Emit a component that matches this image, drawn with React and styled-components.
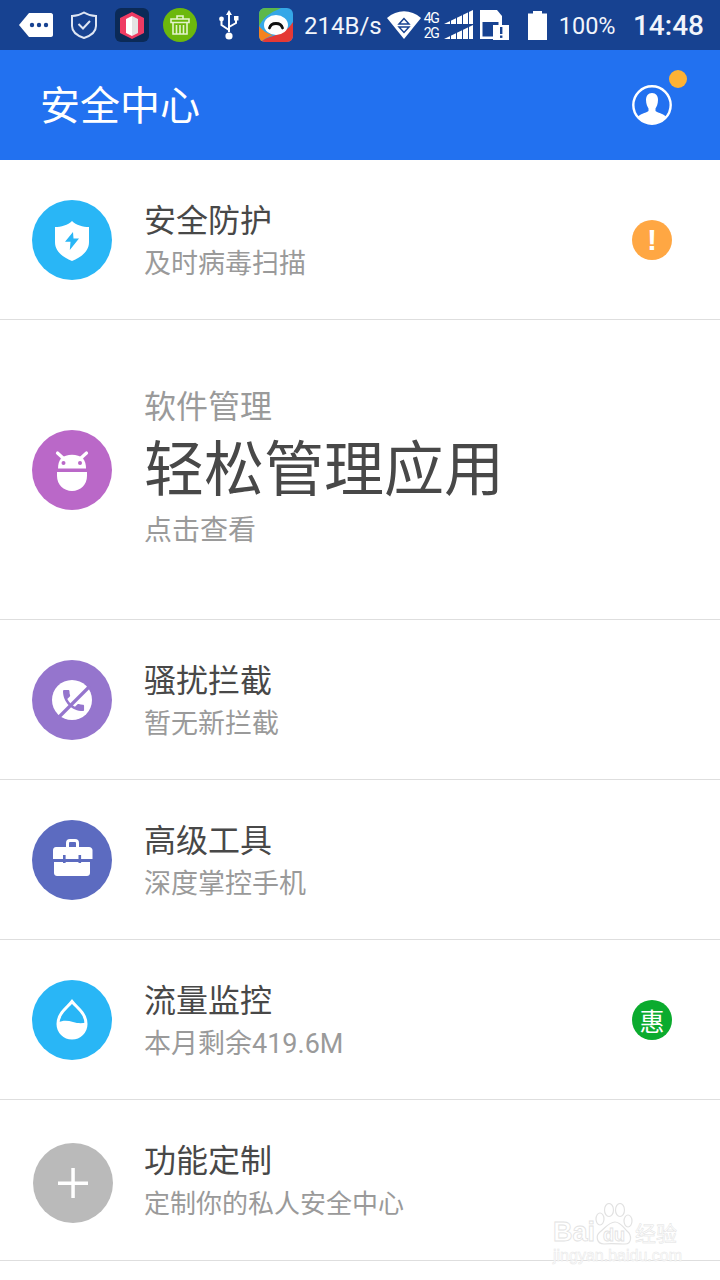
import React from "react";
import styled, { createGlobalStyle } from "styled-components";

const Global = createGlobalStyle`
  html, body { margin: 0; padding: 0; background: #fff; }
  body { font-family: Roboto, "Noto Sans CJK SC", sans-serif; }
`;

const Page = styled.div`
  position: relative;
  width: 720px;
  height: 1280px;
  overflow: hidden;
  background: #fff;
`;

const StatusBar = styled.div`
  display: flex;
  align-items: center;
  height: 50px;
  padding: 0 16px 0 19px;
  box-sizing: border-box;
  background: #174291;
  color: #fff;
`;

const Glyph = styled.svg`
  flex: none;
  margin-left: ${(p) => p.$gap || 0}px;
`;

const StatusText = styled.span`
  margin-left: ${(p) => p.$gap || 0}px;
  padding-top: 2px;
  font-size: ${(p) => p.$size}px;
  font-weight: ${(p) => p.$weight || 400};
  line-height: 48px;
  white-space: nowrap;
  color: #f2f5fb;
`;

const NetLabels = styled.div`
  display: flex;
  flex-direction: column;
  width: 15px;
  margin: 2px 0 0 3px;
  font-size: 14px;
  line-height: 15px;
  letter-spacing: -1.300px;
`;

const Clock = styled(StatusText)`
  margin-left: auto;
`;

const Header = styled.header`
  display: flex;
  align-items: center;
  justify-content: space-between;
  height: 110px;
  padding: 0 48px 0 40px;
  box-sizing: border-box;
  background: #2271f0;
`;

const HeaderTitle = styled.h1`
  margin: 4px 0 0;
  font-size: 40px;
  font-weight: 400;
  color: #fff;
  line-height: 56px;
`;

const Avatar = styled.div`
  position: relative;
  width: 40px;
  height: 40px;
`;

const AvatarDot = styled.span`
  position: absolute;
  top: -15px;
  right: -15px;
  width: 18px;
  height: 18px;
  border-radius: 50%;
  background: #fdb235;
`;

const Row = styled.div`
  display: flex;
  align-items: center;
  height: ${(p) => p.$height}px;
  padding: 0 48px 0 32px;
  box-sizing: border-box;
  border-bottom: 1px solid #dedede;
`;

const IconCircle = styled.div`
  flex: none;
  width: 80px;
  height: 80px;
  margin: ${(p) => (p.$low ? "6px 0 0 1px" : "0")};
  border-radius: 50%;
  background: ${(p) => p.$color};
`;

const TextBlock = styled.div`
  flex: 1;
  display: flex;
  flex-direction: column;
  margin-left: ${(p) => (p.$low ? 31 : 32)}px;
  padding: ${(p) => (p.$big ? "0 0 5px" : "4px 0 0")};
`;

const Title = styled.div`
  font-size: 32px;
  line-height: 44px;
  color: ${(p) => (p.$muted ? "#9a9a9a" : "#484848")};
`;

const Big = styled.div`
  font-size: 60px;
  line-height: 84px;
  color: #484848;
`;

const Sub = styled.div`
  font-size: ${(p) => p.$size || 27}px;
  line-height: ${(p) => (p.$size === 28 ? 36 : 42)}px;
  color: #9a9a9a;
`;

const Badge = styled.div`
  flex: none;
  display: flex;
  align-items: center;
  justify-content: center;
  width: 40px;
  height: 40px;
  border-radius: 50%;
  background: ${(p) => p.$color};
  color: #fff;
  font-size: ${(p) => p.$size}px;
  font-weight: ${(p) => p.$weight || 400};
`;

const AlertMark = styled.span`
  font-family: "Liberation Sans", sans-serif;
  line-height: 40px;
`;

const Watermark = styled.div`
  position: absolute;
  left: 552px;
  top: 1200px;
  width: 140px;
  height: 64px;
  color: #fff;
  -webkit-text-stroke: 0.8px #e2e2e2;
`;

const WmBai = styled.span`
  position: absolute;
  left: 1px;
  top: 16px;
  font: 700 27px/32px "Liberation Sans", sans-serif;
`;

const WmDu = styled.span`
  position: absolute;
  left: 43px;
  top: 3px;
`;

const WmCn = styled.span`
  position: absolute;
  left: 83px;
  top: 18px;
  font: 400 21px/28px "Noto Sans CJK SC", sans-serif;
  -webkit-text-stroke: 0.5px #e2e2e2;
`;

const WmUrl = styled.span`
  position: absolute;
  left: 1px;
  top: 47px;
  font: 400 16px/18px "Liberation Sans", sans-serif;
  -webkit-text-stroke: 0.5px #e6e6e6;
  white-space: nowrap;
`;

const Shield = () => (
  <svg width="80" height="80" viewBox="0 0 80 80">
    <path fill="#fff" d="M40 21C44 25 51 27 57 27V42C57 51 50 57 40 61C30 57 23 51 23 42V27C29 27 36 25 40 21Z" />
    <path fill="#29b6f6" d="M41 32L33 41.700H38.500L37.800 50L47 38.500H41.500Z" />
  </svg>
);

const Droid = () => (
  <svg width="80" height="80" viewBox="0 0 80 80" fill="#fff">
    <path d="M26 38.500C26 34 27 31 29 28.500C34 23.500 46 23.500 51 28.500C53 31 54 34 54 38.500Z" />
    <path fill="none" stroke="#fff" strokeWidth="3.200" strokeLinecap="round" d="M25.500 23L31 28M54.500 23L49 28" />
    <path d="M25 42H55V46C55 54.500 48.500 61 40 61C31.500 61 25 54.500 25 46Z" />
    <circle cx="31.500" cy="33" r="2" fill="#ba68c8" />
    <circle cx="48" cy="33" r="2" fill="#ba68c8" />
  </svg>
);

const PhoneBlock = () => (
  <svg width="80" height="80" viewBox="0 0 80 80">
    <circle cx="40" cy="40" r="20" fill="#fff" />
    <path
      fill="#9575cd"
      transform="translate(27.500 26.500) scale(1.170)"
      d="M6.620 10.790c1.440 2.830 3.760 5.140 6.590 6.590l2.200-2.200c.27-.27.67-.36 1.020-.24 1.120.37 2.330.57 3.570.57.55 0 1 .45 1 1V20c0 .55-.45 1-1 1-9.390 0-17-7.610-17-17 0-.55.45-1 1-1h3.500c.55 0 1 .45 1 1 0 1.250.2 2.450.57 3.570.11.35.03.74-.25 1.020l-2.200 2.200z"
    />
    <path stroke="#9575cd" strokeWidth="3.200" d="M58 26L26 58" />
  </svg>
);

const Toolbox = () => (
  <svg width="80" height="80" viewBox="0 0 80 80" fill="#fff">
    <path fill="none" stroke="#fff" strokeWidth="3" d="M35.500 27V23C35.500 21.500 36.500 20.500 38 20.500H43C44.500 20.500 45.500 21.500 45.500 23V27" />
    <path d="M24 27H57C59 27 60.500 28.500 60.500 30.500V39H21V30.500C21 28.500 22 27 24 27Z" />
    <path d="M22 42H58V53C58 55 56.500 56 55 56H25C23.500 56 22 55 22 53Z" />
    <rect x="31" y="35" width="2.600" height="8" fill="#5c6bc0" />
    <rect x="46.500" y="35" width="2.600" height="8" fill="#5c6bc0" />
    <rect x="21" y="39" width="38" height="3" fill="#5c6bc0" />
  </svg>
);

const Drop = () => (
  <svg width="80" height="80" viewBox="0 0 80 80">
    <path fill="none" stroke="#fff" strokeWidth="3" d="M40 21.500C45 28 54 33 54 44A14 14 0 0 1 26 44C26 33 35 28 40 21.500Z" />
    <path fill="#fff" d="M26 42.500C31 40 36 40.500 41 42C46 43.500 50 43.500 54 42.500V44A14 14 0 0 1 26 44Z" />
  </svg>
);

const Plus = () => (
  <svg width="80" height="80" viewBox="0 0 80 80" fill="#fff">
    <rect x="25" y="38.500" width="30" height="3.500" />
    <rect x="38.300" y="25" width="3.500" height="30" />
  </svg>
);

const AvatarIcon = () => (
  <svg width="40" height="40" viewBox="0 0 40 40">
    <defs>
      <clipPath id="avatarClip">
        <circle cx="20" cy="20" r="18.500" />
      </clipPath>
    </defs>
    <circle cx="20" cy="20" r="18.700" fill="none" stroke="#fff" strokeWidth="2.400" />
    <g clipPath="url(#avatarClip)" fill="#fff">
      <path d="M20 8C24 8 26 11 26 15C26 19 24.500 22 23.500 23.500V26C26 28 33 29 35 33V40H5V33C7 29 14 28 16.500 26V23.500C15.500 22 14 19 14 15C14 11 16 8 20 8Z" />
    </g>
  </svg>
);

const rows = [
  { h: 160, color: "#29b6f6", Icon: Shield, title: "安全防护", sub: "及时病毒扫描", alert: true },
  { big: true, h: 300, color: "#ba68c8", Icon: Droid },
  { h: 160, color: "#9575cd", Icon: PhoneBlock, title: "骚扰拦截", sub: "暂无新拦截" },
  { h: 160, color: "#5c6bc0", Icon: Toolbox, title: "高级工具", sub: "深度掌控手机" },
  { h: 160, color: "#29b6f6", Icon: Drop, title: "流量监控", sub: "本月剩余419.6M", hui: true },
  { h: 161, color: "#bababa", Icon: Plus, title: "功能定制", sub: "定制你的私人安全中心", low: true, subSize: 26 },
];

export default function App() {
  return (
    <Page>
      <Global />
      <StatusBar>
        <Glyph width="34" height="26" viewBox="0 0 34 26">
          <path fill="#fff" d="M10 1H32C33 1 34 2 34 3V23C34 24 33 25 32 25H10L0 13Z" />
          <circle cx="13" cy="13" r="2.200" fill="#174291" />
          <circle cx="20" cy="13" r="2.200" fill="#174291" />
          <circle cx="27" cy="13" r="2.200" fill="#174291" />
        </Glyph>
        <Glyph $gap={18} width="26" height="28" viewBox="0 0 26 28">
          <path fill="none" stroke="#dfe6f3" strokeWidth="2" d="M13 1.500C17 4 21 5 25 5V15C25 21 19 25 13 27C7 25 1 21 1 15V5C5 5 9 4 13 1.500Z" />
          <path fill="none" stroke="#dfe6f3" strokeWidth="2" d="M7.500 13L12 17.500L19 10" />
        </Glyph>
        <Glyph $gap={18} width="34" height="34" viewBox="0 0 34 34">
          <rect width="34" height="34" rx="6" fill="#0b2a57" />
          <path fill="#ef3b63" d="M17 4L29 10V25L17 31L5 25V10Z" />
          <path fill="#fff" d="M11 11L17 8V28L11 25Z" />
          <path fill="#e4e4e4" d="M17 8L23 11V25L17 28Z" />
        </Glyph>
        <Glyph $gap={14} width="34" height="34" viewBox="0 0 34 34">
          <circle cx="17" cy="17" r="17" fill="#6cb80c" />
          <path fill="none" stroke="#e4f3cc" strokeWidth="1.600" d="M14 11V8H20V11M8 11H26V14.500H8ZM10 14.500V26H24V14.500M13.500 17V26M17 17V26M20.500 17V26" />
        </Glyph>
        <Glyph $gap={22} width="20" height="30" viewBox="0 0 20 30">
          <circle cx="10" cy="26" r="3.600" fill="#fff" />
          <path fill="#fff" d="M10 0L13 5H11V22H9V5H7Z" />
          <path fill="none" stroke="#fff" strokeWidth="2" d="M10 20L2.500 15V10M10 17L17 13V9" />
          <circle cx="2.500" cy="9" r="2.400" fill="#fff" />
          <rect x="15" y="6" width="4.500" height="4.500" fill="#fff" />
        </Glyph>
        <Glyph $gap={20} width="34" height="34" viewBox="0 0 34 34">
          <defs>
            <clipPath id="weatherClip">
              <rect width="34" height="34" rx="6" />
            </clipPath>
          </defs>
          <g clipPath="url(#weatherClip)">
            <rect width="34" height="34" fill="#35a7e8" />
            <path fill="#5db84a" d="M0 0H22C16 3 6 6 0 18Z" />
            <path fill="#f5821f" d="M0 18C3 22 8 26 14 27C8 29 4 32 2 34H0Z" />
            <path fill="#e53935" d="M2 34C10 26 24 30 34 14V34Z" />
            <ellipse cx="17" cy="17" rx="12" ry="10" fill="#fff" />
            <path fill="none" stroke="#111" strokeWidth="2.800" strokeLinecap="round" d="M10.500 20C12 14 22 14 23.500 20" />
          </g>
        </Glyph>
        <StatusText $gap={11} $size={24}>214B/s</StatusText>
        <Glyph $gap={5} width="34" height="28" viewBox="0 0 34 28">
          <path fill="#fff" d="M0 7C10 -2 24 -2 34 7L17 28Z" />
          <path fill="none" stroke="#174291" strokeWidth="1.500" d="M17 7.500L12 13H22ZM12 16H22L17 21.500Z" />
        </Glyph>
        <NetLabels>
          <span>4G</span>
          <span>2G</span>
        </NetLabels>
        <Glyph $gap={5} width="29" height="30" viewBox="0 0 29 30">
          <path fill="#fff" d="M0 14L29 0V14ZM0 29L29 15V29Z" />
          <path stroke="#174291" strokeWidth="1" d="M6.500 0V30M12.500 0V30M18.500 0V30M24.500 0V30" />
        </Glyph>
        <Glyph $gap={7} width="29" height="30" viewBox="0 0 29 30">
          <path fill="#fff" d="M0 0H17L22 6V29H0Z" />
          <rect x="2.500" y="12" width="16" height="14.500" fill="#174291" />
          <rect x="13" y="15" width="16" height="15" fill="#fff" />
          <rect x="20" y="17" width="2.400" height="7" fill="#174291" />
          <rect x="20" y="25.500" width="2.400" height="2.400" fill="#174291" />
        </Glyph>
        <Glyph $gap={19} width="19" height="29" viewBox="0 0 19 29">
          <path fill="#fff" d="M5 0H14V2.500H19V29H0V2.500H5Z" />
        </Glyph>
        <StatusText $gap={12} $size={23.500}>100%</StatusText>
        <Clock $size={28} $weight={500}>14:48</Clock>
      </StatusBar>
      <Header>
        <HeaderTitle>安全中心</HeaderTitle>
        <Avatar>
          <AvatarIcon />
          <AvatarDot />
        </Avatar>
      </Header>
      {rows.map((r, i) => {
        const { Icon } = r;
        return (
          <Row key={i} $height={r.h}>
            <IconCircle $color={r.color} $low={r.low}>
              <Icon />
            </IconCircle>
            {r.big ? (
              <TextBlock $big>
                <Title $muted>软件管理</Title>
                <Big>轻松管理应用</Big>
                <Sub $size={28}>点击查看</Sub>
              </TextBlock>
            ) : (
              <TextBlock $low={r.low}>
                <Title>{r.title}</Title>
                <Sub $size={r.subSize}>{r.sub}</Sub>
              </TextBlock>
            )}
            {r.alert && (
              <Badge $color="#ffa743" $size={30} $weight={700}>
                <AlertMark>!</AlertMark>
              </Badge>
            )}
            {r.hui && (
              <Badge $color="#0bab2e" $size={25}>
                惠
              </Badge>
            )}
          </Row>
        );
      })}
      <Watermark>
        <WmBai>Bai</WmBai>
        <WmDu>
          <svg width="38" height="42" viewBox="0 0 38 42" fill="#fff" stroke="#e2e2e2" strokeWidth="1.200">
            <ellipse cx="5" cy="16" rx="4" ry="6" />
            <ellipse cx="14" cy="7" rx="4.500" ry="6.500" />
            <ellipse cx="25" cy="7" rx="4.500" ry="6.500" />
            <ellipse cx="33" cy="18" rx="4" ry="6" />
            <path d="M20 19C25 19 28 24 32 28C37 32 37 41 30 41C25 41 15 40 9 41C2 41 0 33 5 29C10 25 14 19 20 19Z" />
            <text x="8" y="38" fontFamily="Liberation Sans, sans-serif" fontSize="18" fontWeight="700" strokeWidth="0.800">du</text>
          </svg>
        </WmDu>
        <WmCn>经验</WmCn>
        <WmUrl>jingyan.baidu.com</WmUrl>
      </Watermark>
    </Page>
  );
}
